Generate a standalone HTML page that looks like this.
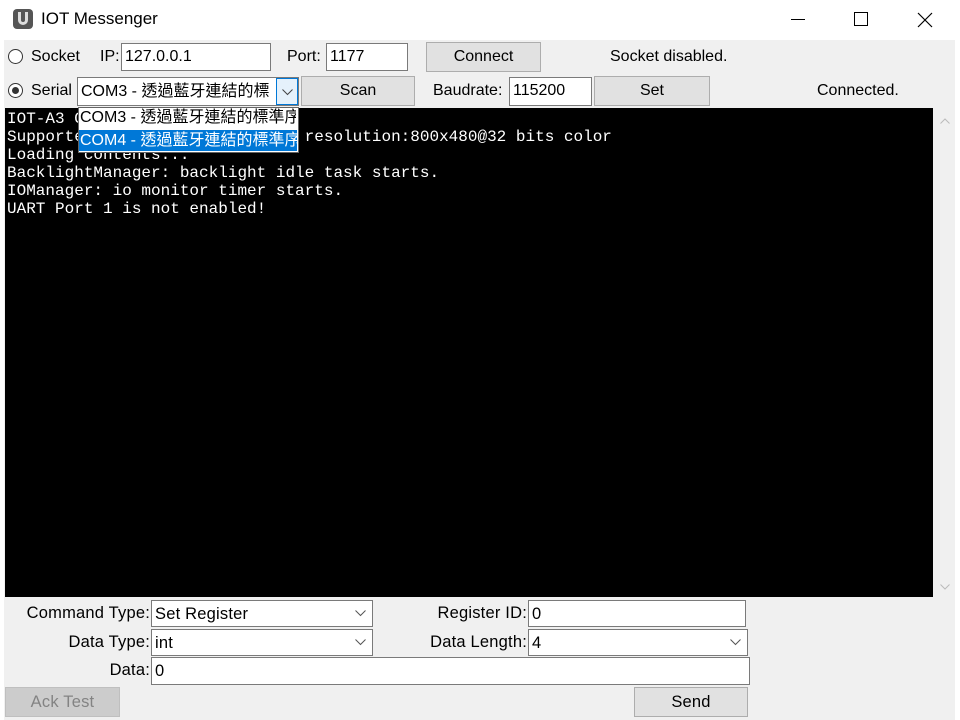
<!DOCTYPE html>
<html><head><meta charset="utf-8"><style>
*{margin:0;padding:0;box-sizing:border-box}
body{width:960px;height:720px;background:#fff;position:relative;overflow:hidden;font-family:"Liberation Sans","Noto Sans CJK TC",sans-serif;font-size:16px;color:#000}
.a{position:absolute;white-space:nowrap}
.client{position:absolute;left:4px;top:40px;width:951px;height:680px;background:#f0f0f0}
.in{position:absolute;background:#fff;border:1px solid #7a7a7a;padding:1px 3px;line-height:24px;overflow:hidden;white-space:nowrap}
.btn{position:absolute;background:#e1e1e1;border:1px solid #adadad;text-align:center;line-height:28px}
.radio{position:absolute;width:15px;height:15px;border:1px solid #333;border-radius:50%;background:#fff}
.term{position:absolute;left:5px;top:108px;width:928px;height:489px;background:#000;color:#fff;font-family:"Liberation Mono",monospace;font-size:16px;line-height:18px;padding:2px 0 0 2px;white-space:pre}
.sb{position:absolute;left:935px;top:108px;width:20px;height:489px;background:#f0f0f0}
.n{font-size:16.5px;letter-spacing:0.2px}
.chev{position:absolute;right:6px;top:9px}
</style></head><body>
<div class="a" style="left:13px;top:9px;width:20px;height:20px;background:#555;border-radius:4px"></div>
<div class="a" style="left:18px;top:12px;width:10px;height:13px;border:3px solid #ddd;border-top:none;border-radius:0 0 5px 5px"></div>
<div class="a" style="left:41px;top:9px;font-size:17px">IOT Messenger</div>
<div class="a" style="left:791px;top:19px;width:14px;height:1px;background:#000"></div>
<div class="a" style="left:854px;top:12px;width:14px;height:14px;border:1px solid #000"></div>
<svg class="a" style="left:917px;top:12px" width="16" height="16"><path d="M1 1L15 15M15 1L1 15" stroke="#000" stroke-width="1.2"/></svg>
<div class="client"></div>
<div class="radio" style="left:8px;top:49px"></div>
<div class="a" style="left:31px;top:48px">Socket</div>
<div class="a" style="left:100px;top:48px">IP:</div>
<div class="in" style="left:121px;top:43px;width:150px;height:28px">127.0.0.1</div>
<div class="a" style="left:287px;top:48px">Port:</div>
<div class="in" style="left:326px;top:43px;width:82px;height:28px">1177</div>
<div class="btn" style="left:426px;top:42px;width:115px;height:30px">Connect</div>
<div class="a" style="left:610px;top:48px">Socket disabled.</div>
<div class="radio" style="left:8px;top:83px"></div>
<div class="a" style="left:12px;top:87px;width:7px;height:7px;border-radius:50%;background:#333"></div>
<div class="a" style="left:31px;top:82px">Serial</div>
<div class="in" style="left:77px;top:77px;width:222px;height:29px;line-height:25px">COM3 - 透過藍牙連結的標</div>
<div class="a" style="left:276px;top:78px;width:22px;height:27px;background:#e5f1fb;border:1px solid #0078d7"><svg style="position:absolute;left:5px;top:10px" width="11" height="7"><path d="M0.5 0.5L5.5 5.5L10.5 0.5" fill="none" stroke="#444"/></svg></div>
<div class="btn" style="left:301px;top:76px;width:114px;height:30px">Scan</div>
<div class="a" style="left:433px;top:82px">Baudrate:</div>
<div class="in" style="left:509px;top:77px;width:83px;height:29px">115200</div>
<div class="btn" style="left:594px;top:76px;width:116px;height:30px">Set</div>
<div class="a" style="left:817px;top:82px">Connected.</div>
<div class="term">IOT-A3 OS v1.0 starting...
Supported display panel max    resolution:800x480@32 bits color
Loading contents...
BacklightManager: backlight idle task starts.
IOManager: io monitor timer starts.
UART Port 1 is not enabled!</div>
<div class="sb"><svg style="position:absolute;left:5px;top:10px" width="10" height="6"><path d="M0.5 5.5L5 1L9.5 5.5" fill="none" stroke="#bbb"/></svg><svg style="position:absolute;left:5px;top:476px" width="10" height="6"><path d="M0.5 0.5L5 5L9.5 0.5" fill="none" stroke="#bbb"/></svg></div>
<div class="a" style="left:78px;top:107px;width:221px;height:46px;background:#fff;border:1px solid #646464"></div>
<div class="a" style="left:80px;top:108px;width:216px;overflow:hidden;line-height:20px">COM3 - 透過藍牙連結的標準序</div>
<div class="a" style="left:79px;top:130px;width:218px;height:21px;background:#0078d7;color:#fff;overflow:hidden;line-height:21px;padding-left:1px">COM4 - 透過藍牙連結的標準序</div>
<div class="a n" style="left:0;width:150px;top:604px;text-align:right">Command Type:</div>
<div class="in n" style="left:151px;top:600px;width:222px;height:27px">Set Register<svg class="chev" width="11" height="7"><path d="M0.5 0.5L5.5 5.5L10.5 0.5" fill="none" stroke="#555"/></svg></div>
<div class="a n" style="left:380px;width:147px;top:604px;text-align:right">Register ID:</div>
<div class="in n" style="left:528px;top:600px;width:218px;height:27px">0</div>
<div class="a n" style="left:0;width:150px;top:633px;text-align:right">Data Type:</div>
<div class="in n" style="left:151px;top:629px;width:222px;height:27px">int<svg class="chev" width="11" height="7"><path d="M0.5 0.5L5.5 5.5L10.5 0.5" fill="none" stroke="#555"/></svg></div>
<div class="a n" style="left:380px;width:147px;top:633px;text-align:right">Data Length:</div>
<div class="in n" style="left:528px;top:629px;width:220px;height:27px">4<svg class="chev" width="11" height="7"><path d="M0.5 0.5L5.5 5.5L10.5 0.5" fill="none" stroke="#555"/></svg></div>
<div class="a n" style="left:0;width:150px;top:661px;text-align:right">Data:</div>
<div class="in n" style="left:151px;top:657px;width:599px;height:28px">0</div>
<div class="btn n" style="left:5px;top:687px;width:115px;height:30px;color:#838383;background:#ccc;border-color:#bfbfbf">Ack Test</div>
<div class="btn n" style="left:634px;top:687px;width:114px;height:30px">Send</div>
</body></html>
